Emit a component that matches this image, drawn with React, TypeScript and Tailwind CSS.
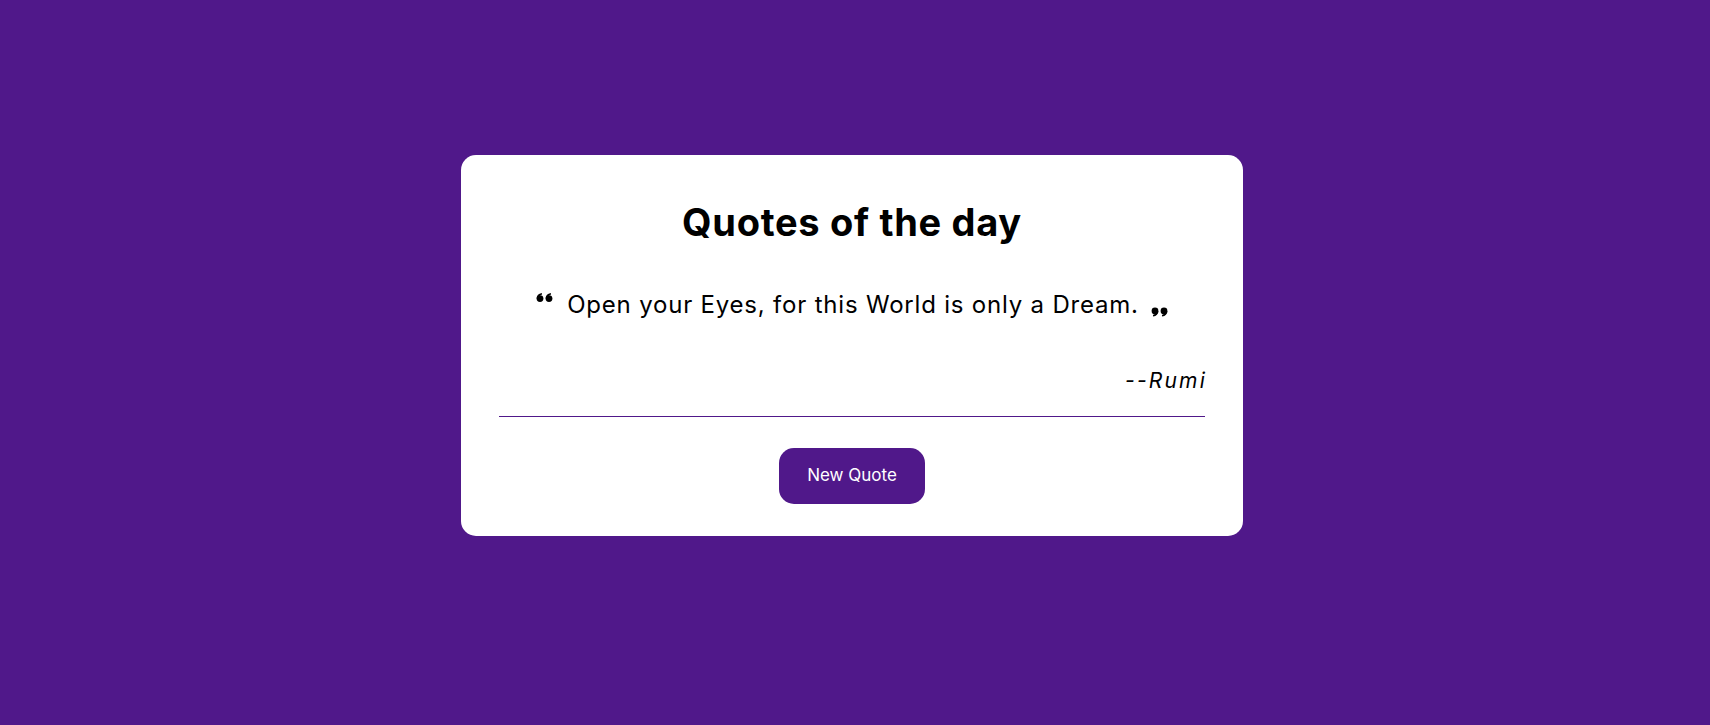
import React from "react";

const Mark = ({ dx }: { dx: number }) => (
  <g transform={`translate(${dx} 0)`}>
    <circle cx="4" cy="5.6" r="3.4" />
    <path d="M0.6 5.6 C0.6 2.6 2.6 0.5 5.8 0 L6.1 1.6 C4.2 2.1 3.2 3.2 3 4.8 Z" />
  </g>
);

const QuoteOpen = () => (
  <svg width="17" height="9" viewBox="0 0 17 9" className="shrink-0">
    <g fill="#000">
      <Mark dx={0} />
      <Mark dx={9} />
    </g>
  </svg>
);

const QuoteClose = () => (
  <svg width="17" height="10" viewBox="0 0 17 9" className="shrink-0 rotate-180">
    <g fill="#000">
      <Mark dx={0} />
      <Mark dx={9} />
    </g>
  </svg>
);

export default function App() {
  return (
    <div
      className="min-h-[725px] w-full bg-[#50188a] flex justify-center items-start pt-[155px] pr-[6px]"
      style={{ fontFamily: "Inter, 'Noto Sans', sans-serif" }}
    >
      <div className="w-[782px] h-[381px] bg-white rounded-[15px] px-[38px] pt-[44px] flex flex-col">
        <h1 className="text-[38px] leading-[46px] font-bold text-black text-center tracking-[0.7px]">
          Quotes of the day
        </h1>
        <div className="mt-[44px] flex justify-center items-start">
          <div className="pt-[4px] mr-[14px]">
            <QuoteOpen />
          </div>
          <p className="text-[24px] leading-[32px] text-black tracking-[0.8px]">
            Open your Eyes, for this World is only a Dream.
          </p>
          <div className="pt-[18px] ml-[12px]">
            <QuoteClose />
          </div>
        </div>
        <div className="mt-[45px] text-right text-[21px] leading-[30px] italic text-black tracking-[2.2px] mr-[-2px]">
          --Rumi
        </div>
        <div className="mt-[20px] border-t border-[#50188a]" />
        <div className="mt-[31px] flex justify-center">
          <button className="w-[146px] h-[56px] rounded-[15px] bg-[#50188a] text-white text-[17px]">
            New Quote
          </button>
        </div>
      </div>
    </div>
  );
}
